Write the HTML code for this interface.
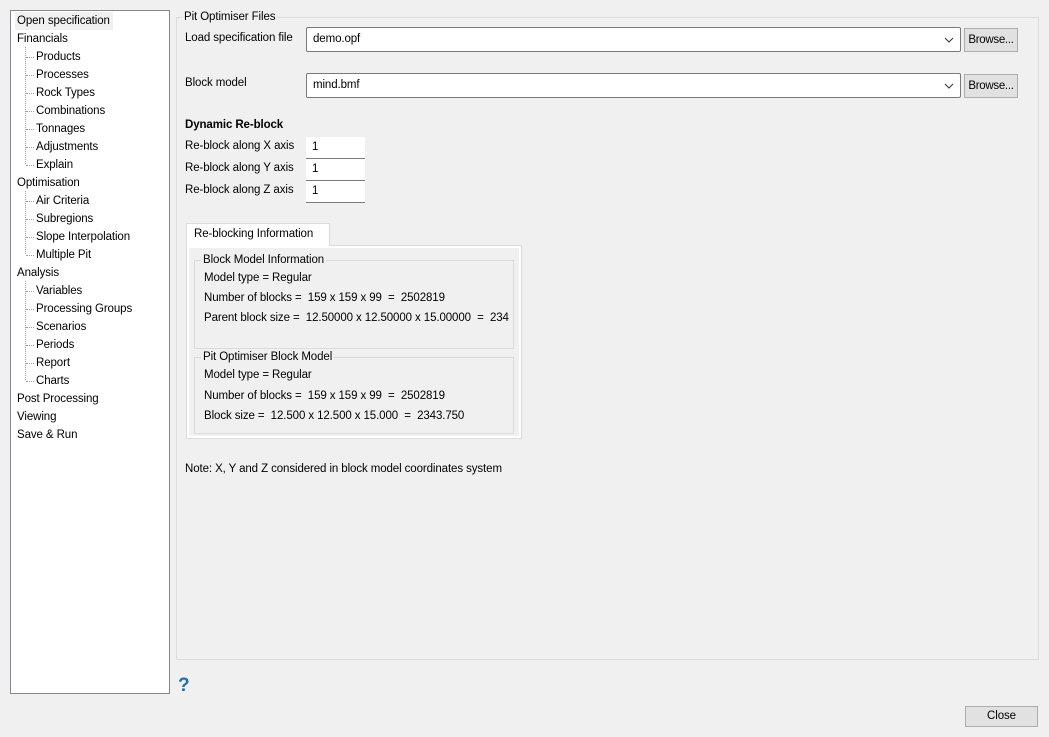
<!DOCTYPE html>
<html><head><style>
body{margin:0;width:1049px;height:737px;background:#f0f0f0;font-family:"Liberation Sans",sans-serif;font-size:11.5px;letter-spacing:-0.1px;color:#000;position:relative;overflow:hidden}
.a{position:absolute;white-space:nowrap}
.tree{position:absolute;left:10px;top:10px;width:158px;height:682px;background:#fff;border:1px solid #828790}
.t{position:absolute;line-height:18px}
.dv{position:absolute;border-left:1px dotted #a0a0a0;width:0}
.dh{position:absolute;border-top:1px dotted #a0a0a0;width:8px;height:0}
.combo{position:absolute;background:#fff;border:1px solid #7a7a7a;border-radius:2px;box-sizing:border-box}
.btn{position:absolute;background:#e1e1e1;border:1px solid #adadad;box-sizing:border-box;text-align:center}
.inp{position:absolute;background:#fff;border-bottom:1px solid #7a7a7a;box-sizing:border-box;padding-left:6px;line-height:21px}
.grp{position:absolute;border:1px solid #dcdcdc;box-sizing:border-box}
.lg{position:absolute;background:#f0f0f0;padding:0 2px;top:-8px;line-height:14px}
</style></head><body>
<div class="tree">
<div class="t" style="left:4px;top:1px;background:#f0f0f0;padding:0 3px 0 2px">Open specification</div>
<div class="t" style="left:6px;top:19px">Financials</div>
<div class="dv" style="left:14px;top:36px;height:117px"></div>
<div class="t" style="left:25px;top:37px">Products</div>
<div class="t" style="left:25px;top:55px">Processes</div>
<div class="t" style="left:25px;top:73px">Rock Types</div>
<div class="t" style="left:25px;top:91px">Combinations</div>
<div class="t" style="left:25px;top:109px">Tonnages</div>
<div class="t" style="left:25px;top:127px">Adjustments</div>
<div class="t" style="left:25px;top:145px">Explain</div>
<div class="t" style="left:6px;top:163px">Optimisation</div>
<div class="dv" style="left:14px;top:180px;height:63px"></div>
<div class="t" style="left:25px;top:181px">Air Criteria</div>
<div class="t" style="left:25px;top:199px">Subregions</div>
<div class="t" style="left:25px;top:217px">Slope Interpolation</div>
<div class="t" style="left:25px;top:235px">Multiple Pit</div>
<div class="t" style="left:6px;top:253px">Analysis</div>
<div class="dv" style="left:14px;top:270px;height:99px"></div>
<div class="t" style="left:25px;top:271px">Variables</div>
<div class="t" style="left:25px;top:289px">Processing Groups</div>
<div class="t" style="left:25px;top:307px">Scenarios</div>
<div class="t" style="left:25px;top:325px">Periods</div>
<div class="t" style="left:25px;top:343px">Report</div>
<div class="t" style="left:25px;top:361px">Charts</div>
<div class="t" style="left:6px;top:379px">Post Processing</div>
<div class="t" style="left:6px;top:397px">Viewing</div>
<div class="t" style="left:6px;top:415px">Save &amp; Run</div>
<div class="dh" style="left:15px;top:46px"></div><div class="dh" style="left:15px;top:64px"></div><div class="dh" style="left:15px;top:82px"></div><div class="dh" style="left:15px;top:100px"></div><div class="dh" style="left:15px;top:118px"></div><div class="dh" style="left:15px;top:136px"></div><div class="dh" style="left:15px;top:154px"></div>
<div class="dh" style="left:15px;top:190px"></div><div class="dh" style="left:15px;top:208px"></div><div class="dh" style="left:15px;top:226px"></div><div class="dh" style="left:15px;top:244px"></div>
<div class="dh" style="left:15px;top:280px"></div><div class="dh" style="left:15px;top:298px"></div><div class="dh" style="left:15px;top:316px"></div><div class="dh" style="left:15px;top:334px"></div><div class="dh" style="left:15px;top:352px"></div><div class="dh" style="left:15px;top:370px"></div>
</div>

<div class="grp" style="left:176px;top:17px;width:863px;height:643px"><div class="lg" style="left:5px">Pit Optimiser Files</div></div>
<div class="a" style="left:185px;top:32px">Load specification file</div>
<div class="combo" style="left:306px;top:27px;width:655px;height:25px"><span class="a" style="left:6px;top:5px">demo.opf</span><svg class="a" style="right:6px;top:9px" width="10" height="6"><path d="M1 1l4 4 4-4" fill="none" stroke="#333"/></svg></div>
<div class="btn" style="left:964px;top:28px;width:54px;height:24px;line-height:22px;letter-spacing:-0.3px">Browse...</div>
<div class="a" style="left:185px;top:77px">Block model</div>
<div class="combo" style="left:306px;top:73px;width:655px;height:25px"><span class="a" style="left:6px;top:5px">mind.bmf</span><svg class="a" style="right:6px;top:9px" width="10" height="6"><path d="M1 1l4 4 4-4" fill="none" stroke="#333"/></svg></div>
<div class="btn" style="left:964px;top:74px;width:54px;height:24px;line-height:22px;letter-spacing:-0.3px">Browse...</div>
<div class="a" style="left:185px;top:119px;font-weight:bold">Dynamic Re-block</div>
<div class="a" style="left:185px;top:140px">Re-block along X axis</div>
<div class="a" style="left:185px;top:162px">Re-block along Y axis</div>
<div class="a" style="left:185px;top:184px">Re-block along Z axis</div>
<div class="inp" style="left:306px;top:137px;width:59px;height:22px">1</div>
<div class="inp" style="left:306px;top:159px;width:59px;height:22px">1</div>
<div class="inp" style="left:306px;top:181px;width:59px;height:22px">1</div>

<div class="a" style="left:186px;top:245px;width:336px;height:194px;background:#fff;border:1px solid #dcdcdc;box-sizing:border-box"></div>
<div class="a" style="left:186px;top:223px;width:144px;height:23px;background:#fff;border:1px solid #dcdcdc;border-bottom:none;box-sizing:border-box;padding:4px 0 0 7px">Re-blocking Information</div>
<div class="a" style="left:189px;top:248px;width:330px;height:188px;background:#f0f0f0"></div>
<div class="grp" style="left:194px;top:260px;width:320px;height:89px"><div class="lg" style="left:6px">Block Model Information</div></div>
<div class="a" style="left:204px;top:272px">Model type = Regular</div>
<div class="a" style="left:204px;top:292px">Number of blocks =&nbsp; 159 x 159 x 99&nbsp; =&nbsp; 2502819</div>
<div class="a" style="left:204px;top:312px">Parent block size =&nbsp; 12.50000 x 12.50000 x 15.00000&nbsp; =&nbsp; 234</div>
<div class="grp" style="left:194px;top:357px;width:320px;height:77px"><div class="lg" style="left:6px">Pit Optimiser Block Model</div></div>
<div class="a" style="left:204px;top:369px">Model type = Regular</div>
<div class="a" style="left:204px;top:390px">Number of blocks =&nbsp; 159 x 159 x 99&nbsp; =&nbsp; 2502819</div>
<div class="a" style="left:204px;top:410px">Block size =&nbsp; 12.500 x 12.500 x 15.000&nbsp; =&nbsp; 2343.750</div>
<div class="a" style="left:185px;top:463px">Note: X, Y and Z considered in block model coordinates system</div>

<div class="a" style="left:178px;top:675px;font-size:19px;font-weight:bold;color:#1e6fb0">?</div>
<div class="btn" style="left:965px;top:706px;width:73px;height:21px;line-height:19px">Close</div>
</body></html>
